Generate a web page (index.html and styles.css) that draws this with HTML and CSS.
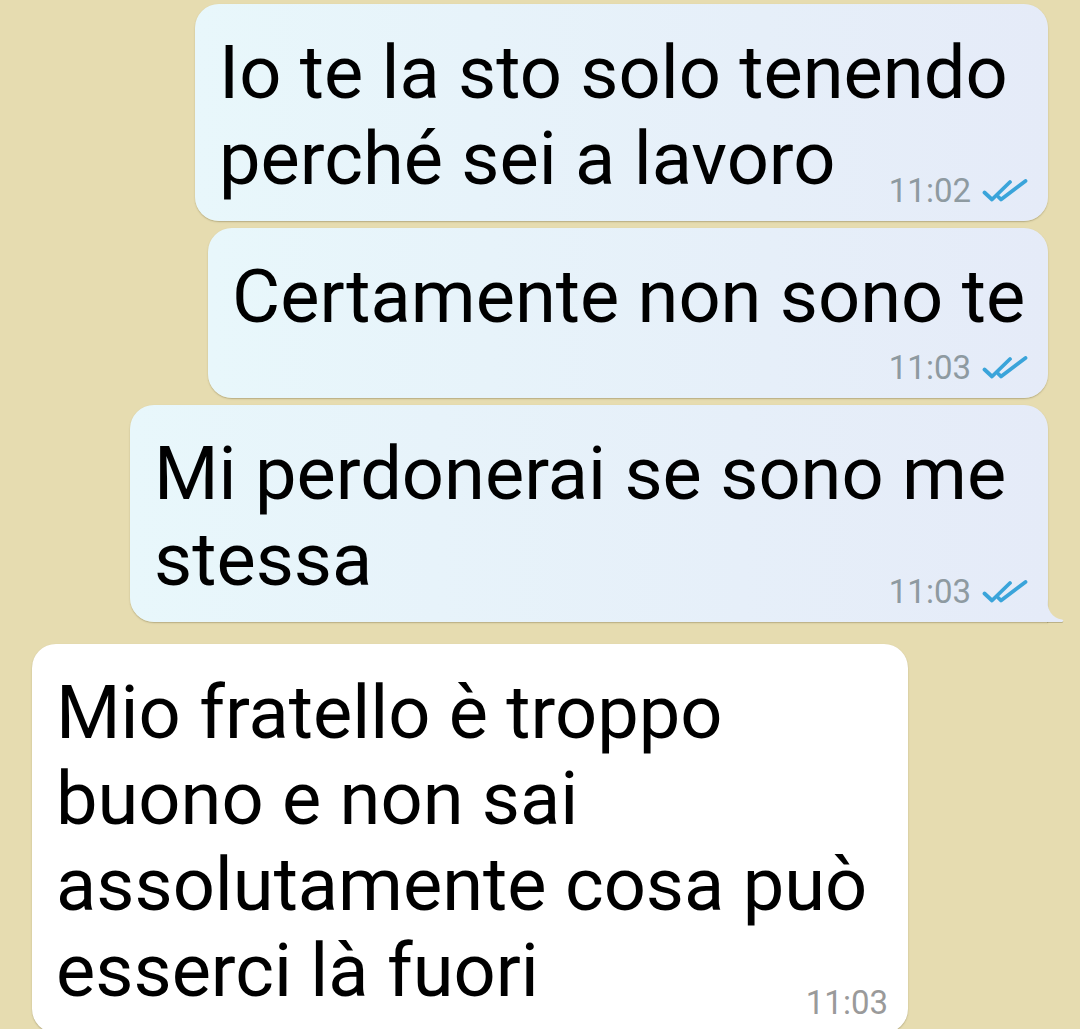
FILE: index.html
```html
<!DOCTYPE html>
<html lang="it">
<head>
    <meta charset="UTF-8">
    <meta name="viewport" content="width=device-width, initial-scale=1.0">
    <title>Chat</title>
    <link rel="stylesheet" href="styles.css">
</head>
<body>
    <div class="chat">
        <div class="msg out first">
            <p class="body"><span class="text">Io te la sto solo tenendo perché sei a lavoro</span></p>
            <div class="meta overlap">
                <span class="time">11:02</span>
                <svg class="ticks" viewBox="0 0 46 24" width="46" height="24"><path d="M2.5 13.5 L10 20.5 L28 3"/><path d="M16.5 18 L19 20.5 L43.5 2"/></svg>
            </div>
        </div>

        <div class="msg out second">
            <p class="body"><span class="text">Certamente non sono te</span></p>
            <div class="meta">
                <span class="time">11:03</span>
                <svg class="ticks" viewBox="0 0 46 24" width="46" height="24"><path d="M2.5 13.5 L10 20.5 L28 3"/><path d="M16.5 18 L19 20.5 L43.5 2"/></svg>
            </div>
        </div>

        <div class="msg out third tail">
            <p class="body"><span class="text">Mi perdonerai se sono me stessa</span></p>
            <div class="meta overlap">
                <span class="time">11:03</span>
                <svg class="ticks" viewBox="0 0 46 24" width="46" height="24"><path d="M2.5 13.5 L10 20.5 L28 3"/><path d="M16.5 18 L19 20.5 L43.5 2"/></svg>
            </div>
            <svg class="tail-shape" viewBox="0 0 18 24" width="18" height="24"><path d="M0 0 C0 12 5 20 15 21.5 Q17.5 22.5 15 24 L0 24 Z"/></svg>
        </div>

        <div class="msg in">
            <p class="body"><span class="text">Mio fratello è troppo buono e non sai assolutamente cosa può esserci là fuori</span></p>
            <div class="meta overlap">
                <span class="time">11:03</span>
            </div>
        </div>
    </div>
</body>
</html>
```

FILE: styles.css
```css
* {
    margin: 0;
    padding: 0;
    box-sizing: border-box;
}

body {
    background: #e6dcb0;
    font-family: 'Roboto', 'Noto Sans', sans-serif;
    overflow: hidden;
}

.chat {
    display: flex;
    flex-direction: column;
    gap: 7px;
    padding: 4px 32px 0 32px;
}

.msg {
    position: relative;
    border-radius: 24px;
    padding: 26px 20px 12px 24px;
    box-shadow: 0 1px 1.5px rgba(90, 80, 40, 0.35);
}

.msg.out {
    align-self: flex-end;
    background: linear-gradient(90deg, #e8f7fb 0%, #e5ebf8 100%);
}

.msg.in {
    align-self: flex-start;
    background: #ffffff;
    margin-top: 15px;
    width: 876px;
}

.first {
    width: 853px;
}

.second {
    width: 840px;
}

.third {
    width: 918px;
}

.msg.tail {
    border-bottom-right-radius: 0;
}

.tail-shape {
    position: absolute;
    right: -17px;
    bottom: 0;
    fill: #e5ebf8;
    filter: drop-shadow(0 1px 0.5px rgba(90, 80, 40, 0.3));
}

.body {
    font-size: 74px;
    line-height: 86px;
    color: #000;
}

.meta {
    display: flex;
    justify-content: flex-end;
    align-items: center;
    gap: 11px;
    height: 36px;
    margin-top: 10px;
}

.meta.overlap {
    margin-top: -29px;
}

.time {
    font-size: 33px;
    line-height: 36px;
    color: #8e9aa1;
}

.msg.in .time {
    color: #9a9a9a;
}

.ticks {
    fill: none;
    stroke: #3aa4da;
    stroke-width: 3.8;
    stroke-linecap: round;
    stroke-linejoin: round;
}
```
